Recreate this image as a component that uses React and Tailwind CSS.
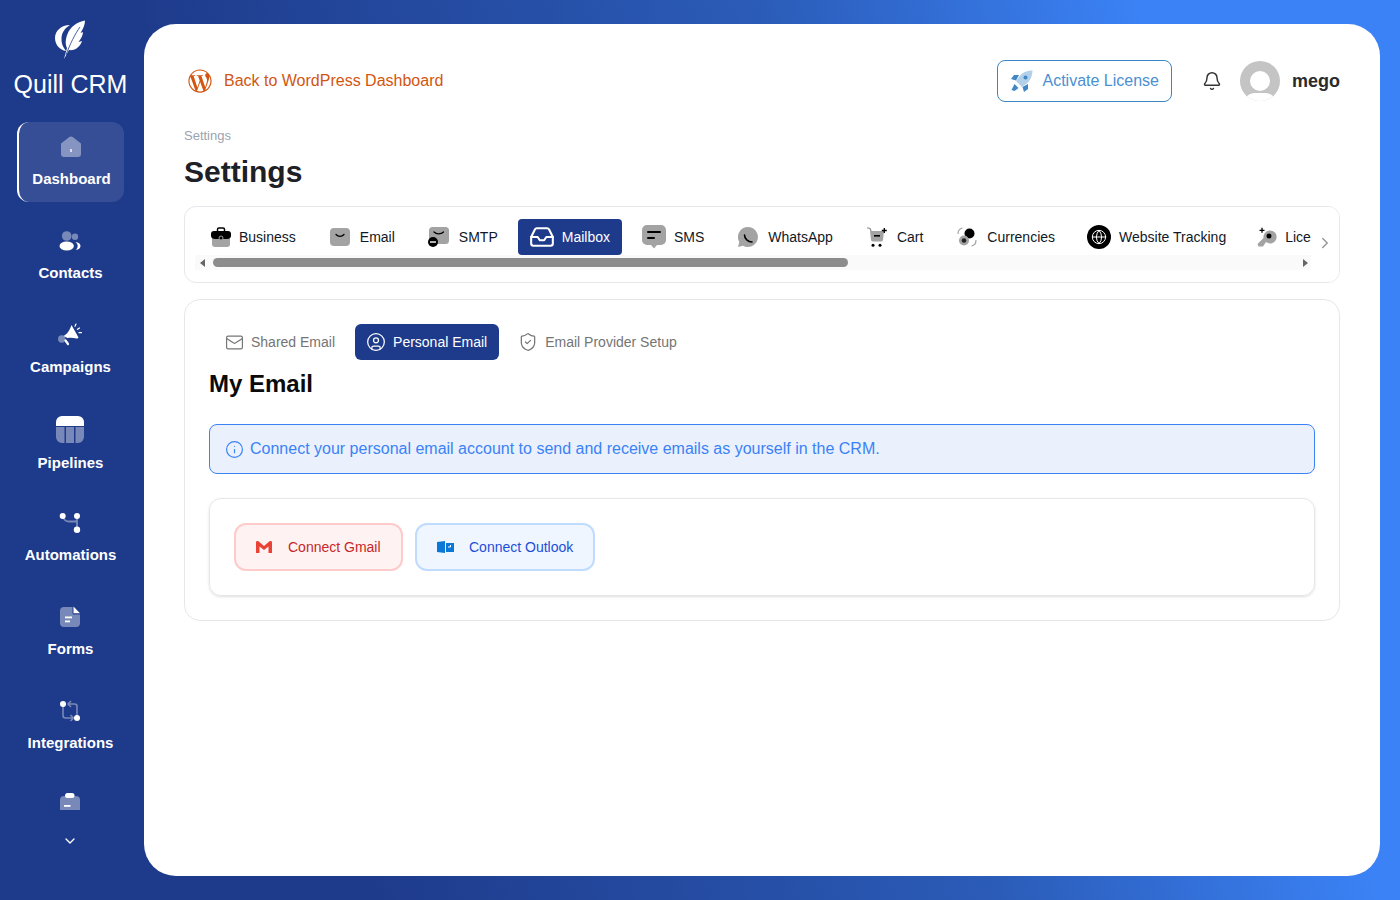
import { Bell, ChevronDown, ChevronRight, CircleUser, Globe, Inbox, Info, Mail, ShieldCheck } from 'lucide-react';
import { FaWordpressSimple } from 'react-icons/fa';

const DashboardIcon = () => (
  <svg width="24" height="24" viewBox="0 0 24 24">
    <path d="M2 8.500 10 2.300a3 3 0 0 1 4 0l8 6.200V19a3 3 0 0 1-3 3H5a3 3 0 0 1-3-3z" fill="#fff" fillOpacity=".4" />
    <rect x="11.300" y="14" width="1.400" height="3" fill="#fff" />
  </svg>
);

const ContactsIcon = () => (
  <svg width="24" height="24" viewBox="0 0 24 24">
    <circle cx="8.700" cy="7" r="4.800" fill="#fff" fillOpacity=".4" />
    <circle cx="17" cy="7.700" r="3.200" fill="#fff" fillOpacity=".4" />
    <ellipse cx="8.700" cy="17" rx="7.200" ry="4.500" fill="#fff" />
    <path d="M17.500 13c3 .3 5 2 5 4s-2 3.700-4.600 4c1.200-1.200 1.800-2.500 1.800-4 0-1.500-.8-2.900-2.200-4z" fill="#fff" />
  </svg>
);

const CampaignsIcon = () => (
  <svg width="24" height="24" viewBox="0 0 24 24">
    <circle cx="3.700" cy="16" r="3.700" fill="#fff" fillOpacity=".4" />
    <path d="M13.500 2 20.500 14.500c-.3.800-1 1.200-2 1-3-.8-6-1-9-.5L5.500 13c3.500-1.500 6.500-6 8-11z" fill="#fff" />
    <path d="M7.500 17.500 10 21" stroke="#fff" strokeWidth="2.200" strokeLinecap="round" />
    <path d="M17 3.200 18 1M19.500 6.300l2-1.300M21 9.700h2.500" stroke="#fff" strokeWidth="1.200" strokeLinecap="round" />
  </svg>
);

const PipelinesIcon = () => (
  <svg width="28" height="28" viewBox="0 -1 28 28">
    <path d="M0 10V6a6 6 0 0 1 6-6h16a6 6 0 0 1 6 6v4z" fill="#fff" />
    <path d="M0 11h8.500v16H6a6 6 0 0 1-6-6zM10 11h8v16h-8zM19.500 11H28v10a6 6 0 0 1-6 6h-2.500z" fill="#fff" fillOpacity=".4" />
  </svg>
);

const AutomationsIcon = () => (
  <svg width="24" height="24" viewBox="0 0 24 24">
    <path d="M5 6c1 3 3 4.500 6 4.500h6a2 2 0 0 0 2-2V7M19 9v8" fill="none" stroke="#fff" strokeOpacity=".4" strokeWidth="1.800" />
    <circle cx="4.700" cy="5" r="3" fill="#fff" />
    <circle cx="19" cy="5" r="3" fill="#fff" />
    <circle cx="19" cy="18.700" r="3.200" fill="#fff" />
  </svg>
);

const FormsIcon = () => (
  <svg width="24" height="24" viewBox="0 0 24 24">
    <path d="M6 2h8.500v6a1.500 1.500 0 0 0 1.500 1.500h6V18a4 4 0 0 1-4 4H6a4 4 0 0 1-4-4V6a4 4 0 0 1 4-4z" fill="#fff" fillOpacity=".4" />
    <path d="M15.500 1.500 22 8.200h-6.500z" fill="#fff" />
    <rect x="7" y="11.500" width="7" height="1.800" fill="#fff" />
    <rect x="7" y="15.500" width="5" height="1.800" fill="#fff" />
  </svg>
);

const IntegrationsIcon = () => (
  <svg width="24" height="24" viewBox="0 0 24 24">
    <path d="M5 7v9.500a2.500 2.500 0 0 0 2.500 2.500H15M12.500 16l3 3-3 3M19 17V7.500A2.500 2.500 0 0 0 16.500 5H10.500M13 2 10 5l3 3" fill="none" stroke="#fff" strokeOpacity=".4" strokeWidth="1.600" />
    <circle cx="5" cy="5" r="3" fill="#fff" />
    <circle cx="19" cy="19" r="3" fill="#fff" />
  </svg>
);

const BoxIcon = () => (
  <svg width="24" height="24" viewBox="0 0 24 24">
    <path d="M2 7a4 4 0 0 1 4-4h12a4 4 0 0 1 4 4v17H2z" fill="#fff" fillOpacity=".4" />
    <rect x="7" y="0" width="9.500" height="5" rx="2.500" fill="#fff" />
    <rect x="6" y="12" width="6.500" height="1.800" fill="#fff" />
  </svg>
);

const NAV_ITEMS = [
  { label: 'Dashboard', icon: <DashboardIcon />, active: true },
  { label: 'Contacts', icon: <ContactsIcon /> },
  { label: 'Campaigns', icon: <CampaignsIcon /> },
  { label: 'Pipelines', icon: <PipelinesIcon /> },
  { label: 'Automations', icon: <AutomationsIcon /> },
  { label: 'Forms', icon: <FormsIcon /> },
  { label: 'Integrations', icon: <IntegrationsIcon /> },
  { label: '', icon: <BoxIcon /> },
];

const BusinessIcon = () => (
  <svg width="20" height="20" viewBox="0 0 20 20">
    <path d="M1 10h18v7a3 3 0 0 1-3 3H4a3 3 0 0 1-3-3z" fill="#a3a3a3" />
    <path d="M6.500 4V2.500A1.500 1.500 0 0 1 8 1h4a1.500 1.500 0 0 1 1.500 1.500V4" fill="none" stroke="#000" strokeWidth="1.500" />
    <path d="M0 7a3 3 0 0 1 3-3h14a3 3 0 0 1 3 3v2c0 2-2 3-4 3H4c-2 0-4-1-4-3z" fill="#000" />
    <circle cx="10" cy="11" r="2" fill="#000" stroke="#a3a3a3" />
  </svg>
);

const EmailIcon = () => (
  <svg width="20" height="18" viewBox="0 0 20 18">
    <rect width="20" height="18" rx="4" fill="#a3a3a3" />
    <path d="M6 6.500c2.200 2.400 5.800 2.400 8 0" fill="none" stroke="#000" strokeWidth="1.300" strokeLinecap="round" />
  </svg>
);

const SmtpIcon = () => (
  <svg width="21" height="20" viewBox="0 0 21 20">
    <rect x="1" y="0" width="20" height="17" rx="3.500" fill="#a3a3a3" />
    <path d="M6 5c2.500 2.500 7 2.500 9.500 0" fill="none" stroke="#000" strokeWidth="1.300" strokeLinecap="round" />
    <circle cx="5" cy="15" r="5" fill="#000" />
    <rect x="2" y="14.300" width="6" height="1.400" fill="#fff" />
  </svg>
);

const SmsIcon = () => (
  <svg width="24" height="24" viewBox="0 0 24 24">
    <path d="M5 0h14a5 5 0 0 1 5 5v10a5 5 0 0 1-5 5h-4l-3 3.500L9 20H5a5 5 0 0 1-5-5V5a5 5 0 0 1 5-5z" fill="#a3a3a3" />
    <rect x="5" y="6" width="14" height="2" rx="1" fill="#000" />
    <rect x="5" y="12" width="8" height="2" rx="1" fill="#000" />
  </svg>
);

const WhatsappIcon = () => (
  <svg width="20" height="20" viewBox="0 0 20 20">
    <path d="M10 0a10 10 0 1 1-5 18.700L0 20l1.300-5A10 10 0 0 1 10 0z" fill="#a3a3a3" />
    <path d="M6.500 8c0 3.500 3.500 7 7.500 7" fill="none" stroke="#000" strokeWidth="1.600" strokeLinecap="round" />
  </svg>
);

const CartIcon = () => (
  <svg width="20" height="20" viewBox="0 0 20 20">
    <path d="M0 1h1.500c1.500 0 2 1 2.200 2L4 4" fill="none" stroke="#888" strokeWidth="1.200" />
    <path d="M3 4h14l-1 9a2 2 0 0 1-2 1.500H6a2 2 0 0 1-2-1.500z" fill="#a3a3a3" />
    <rect x="7" y="8" width="6" height="1.600" fill="#000" />
    <path d="M17.300 1v5M14.800 3.500h5" stroke="#000" strokeWidth="1.300" />
    <circle cx="6" cy="18.300" r="1.500" fill="#000" />
    <circle cx="13" cy="18.300" r="1.500" fill="#000" />
  </svg>
);

const CurrenciesIcon = () => (
  <svg width="20" height="20" viewBox="0 0 20 20">
    <path d="M1 7c0-3 2-5.500 4.500-6M19 13c0 3-2 5.500-4.500 6" fill="none" stroke="#a3a3a3" strokeWidth="1.200" />
    <circle cx="12.500" cy="6.500" r="5" fill="#000" />
    <circle cx="7" cy="13.500" r="5" fill="#a3a3a3" />
    <circle cx="7" cy="13.500" r="2.300" fill="#222" />
  </svg>
);

const LicenseIcon = () => (
  <svg width="20" height="20" viewBox="0 0 20 20">
    <path d="M12.500 3.500a6.500 6.500 0 1 1-3.500 11.500l-3 4.500H1.500l-1-2.500 6-6a6.500 6.500 0 0 1 6-7.500z" fill="#a3a3a3" />
    <circle cx="12" cy="9" r="2.500" fill="#000" />
    <path d="M5 .800v5M2.500 3.300h5" stroke="#000" strokeWidth="1.300" />
  </svg>
);

const TABS = [
  { label: 'Business', icon: <BusinessIcon />, gap: 'gap-2' },
  { label: 'Email', icon: <EmailIcon />, gap: 'gap-[10px] ml-[2px]' },
  { label: 'SMTP', icon: <SmtpIcon />, gap: 'gap-[10px] ml-px' },
  { label: 'Mailbox', icon: <Inbox size={26} strokeWidth={1.900} className="-mx-px" />, gap: 'gap-2', active: true },
  { label: 'SMS', icon: <SmsIcon />, gap: 'gap-2' },
  { label: 'WhatsApp', icon: <WhatsappIcon />, gap: 'gap-[10px] ml-[2px]' },
  { label: 'Cart', icon: <CartIcon />, gap: 'gap-[10px] ml-[2px]' },
  { label: 'Currencies', icon: <CurrenciesIcon />, gap: 'gap-[10px] ml-[2px]' },
  {
    label: 'Website Tracking',
    icon: (
      <span className="flex h-6 w-6 items-center justify-center rounded-full bg-black text-white">
        <Globe size={16} strokeWidth={1.500} />
      </span>
    ),
    gap: 'gap-2',
  },
  { label: 'License', icon: <LicenseIcon />, gap: 'gap-2 -ml-px' },
];

const QuillLogo = () => (
  <svg width="30" height="40" viewBox="0 0 30 40">
    <path d="M15 5C6 5 0 11 0 18c0 7 5 12 11 13-3-4-5-8-4.500-13C7 12 10 8 15 5z" fill="#fff" />
    <path d="M30 .5C22 2 15 7 12.500 14c-2 5-2.500 10-.5 14L9 39l5-9c6 1 11-3 13-9l-3.500 1c2.500-3 4.500-7 4.500-10l-2.500 1C28 9 30 5 30 .5z" fill="#fff" />
    <path d="M25 7C20 14 15 24 11 35" fill="none" stroke="#1e3a8a" strokeWidth=".8" />
  </svg>
);

const RocketIcon = () => (
  <svg width="22" height="22" viewBox="0 0 22 22">
    <path d="M21.500.5c-6 0-11 2.500-14 7L5 11l6 6 3.500-2.500c4.500-3 7-8 7-14.500z" fill="#b3d0ea" />
    <circle cx="14.500" cy="7.500" r="2" fill="#3f88c5" />
    <path d="M8 5H3L0 9l5 1.500zM17 14v5l-4 3-1.500-5zM3.500 14l4 4-4 3-3-1z" fill="#3f88c5" />
  </svg>
);

const OutlookIcon = () => (
  <svg width="17" height="12" viewBox="0 0 17 12">
    <path d="M0 1 8 0v12l-8-1z" fill="#0a78d7" />
    <path d="M9 2h8v9H9z" fill="#0a78d7" />
    <path d="M11 6h2.500V4" fill="none" stroke="#fff" strokeWidth="1" />
  </svg>
);

function App() {
  return (
    <div className="flex h-[900px] w-full overflow-hidden bg-[linear-gradient(75deg,#1e3a8a_22%,#2b5cb8_61%,#3b82f6_84%)] font-['Liberation_Sans',Arial,sans-serif]">
      <aside className="flex w-[144px] shrink-0 flex-col items-center bg-[#1e3a8a] pr-[3px] text-white">
        <div className="mr-[2px] mt-5 flex h-10 items-center justify-center">
          <QuillLogo />
        </div>
        <div className="mt-[9px] whitespace-nowrap text-[25px] leading-[30px]">Quill CRM</div>
        <nav className="mt-[23px] flex h-[688px] flex-col gap-[14px] overflow-hidden">
          {NAV_ITEMS.map((item, index) => (
            <a
              key={index}
              className={`flex h-[80px] w-[107px] shrink-0 flex-col items-center justify-center gap-[9px] rounded-xl text-[15px] font-bold leading-5 ${
                item.active ? 'border-l-2 border-white bg-white/10' : ''
              }`}
            >
              <span className="flex -translate-x-px -translate-y-px">{item.icon}</span>
              <span className="h-5 whitespace-nowrap">{item.label}</span>
            </a>
          ))}
        </nav>
        <ChevronDown size={16} className="mr-[2px] mt-[23px]" />
      </aside>

      <main className="my-6 mr-5 flex-1 rounded-[32px] bg-white px-10 pt-9">
        <header className="flex h-[42px] items-center justify-between">
          <a className="flex items-center gap-3 pl-1 text-base text-[#d2560f]">
            <FaWordpressSimple size={24} />
            Back to WordPress Dashboard
          </a>
          <div className="flex items-center">
            <button className="flex h-[42px] w-[175px] items-center gap-[9.5px] rounded-lg border border-[#3b86c6] pl-[13px] text-base text-[#4a90d2]">
              <RocketIcon />
              Activate License
            </button>
            <Bell size={20} className="ml-[30px] text-[#333]" strokeWidth={1.750} />
            <div className="relative ml-[18px] h-10 w-10 overflow-hidden rounded-full bg-[#c4c4c4]">
              <div className="absolute left-[10px] top-[10px] h-5 w-5 rounded-full bg-white" />
              <div className="absolute left-[3px] top-[32px] h-6 w-[34px] rounded-full bg-white" />
            </div>
            <span className="ml-3 text-lg font-bold text-[#2b2b2b]">mego</span>
          </div>
        </header>

        <div className="mt-[26px] text-[13px] leading-4 text-[#9ca3af]">Settings</div>
        <h1 className="mt-[10px] text-3xl font-bold leading-9 text-[#1d2026]">Settings</h1>

        <section className="relative mt-4 h-[77px] overflow-hidden rounded-xl border border-[#e5e7eb] pt-3">
          <div className="flex gap-2 overflow-hidden pl-[14px] pr-[28px]">
            {TABS.map((tab) => (
              <a
                key={tab.label}
                className={`flex h-9 shrink-0 items-center rounded-sm px-3 text-sm ${tab.gap} ${
                  tab.active ? 'bg-[#1e3a8a] text-white' : 'text-[#111827]'
                }`}
              >
                {tab.icon}
                {tab.label}
              </a>
            ))}
          </div>
          <div className="ml-[10px] mr-[28px] flex h-[15px] items-center bg-[#fafafa] pl-[5px]">
            <span className="h-0 w-0 border-y-[4px] border-r-[5px] border-y-transparent border-r-[#666]" />
            <div className="ml-2 h-[9px] w-[635px] rounded-full bg-[#8c8c8c]" />
            <span className="ml-auto mr-[3px] h-0 w-0 border-y-[4px] border-l-[5px] border-y-transparent border-l-[#666]" />
          </div>
          <div className="absolute bottom-0 right-0 top-0 flex w-7 items-center justify-center bg-white pb-1">
            <ChevronRight size={18} className="text-[#999]" />
          </div>
        </section>

        <section className="mt-4 h-[322px] rounded-2xl border border-[#e5e7eb] p-6">
          <div className="flex items-center gap-2 text-sm text-[#757575]">
            <a className="flex h-9 items-center gap-2 px-3 pl-4">
              <Mail size={19} strokeWidth={1.500} className="-mx-[0.5px]" />
              Shared Email
            </a>
            <a className="flex h-9 items-center gap-2 rounded-md bg-[#1e3a8a] px-3 text-white">
              <CircleUser size={20} strokeWidth={1.500} className="-mx-px" />
              Personal Email
            </a>
            <a className="flex h-9 items-center gap-2 px-3">
              <ShieldCheck size={20} strokeWidth={1.500} className="-mx-px" />
              Email Provider Setup
            </a>
          </div>
          <h2 className="mt-2 text-2xl font-bold leading-8 text-[#0a0a0a]">My Email</h2>

          <div className="mt-6 flex h-[50px] items-center gap-2 rounded-lg border border-[#3b82f6] bg-[#eaf1fd] pl-4 text-base text-[#3b82f6]">
            <Info size={19} strokeWidth={1.500} className="-mx-[1.5px]" />
            Connect your personal email account to send and receive emails as yourself in the CRM.
          </div>

          <div className="mt-6 flex h-[98px] items-center gap-3 rounded-xl border border-[#e5e7eb] px-6 shadow-sm">
            <button className="flex h-12 w-[169px] items-center gap-4 rounded-xl border-2 border-[#fecaca] bg-[#fef2f2] pl-5 text-sm text-[#c62828]">
              <svg width="16" height="12" viewBox="0 0 16 12">
                <path d="M0 1.500A1.500 1.500 0 0 1 2.500.300L8 5 13.500.300A1.500 1.500 0 0 1 16 1.500V12h-3.500V5.500L8 9 3.500 5.500V12H0z" fill="#ea4335" />
              </svg>
              Connect Gmail
            </button>
            <button className="flex h-12 w-[180px] items-center gap-[15px] rounded-xl border-2 border-[#bfdbfe] bg-[#eff6ff] pl-5 text-sm text-[#1d4ed8]">
              <OutlookIcon />
              Connect Outlook
            </button>
          </div>
        </section>
      </main>
    </div>
  );
}

export default App;
